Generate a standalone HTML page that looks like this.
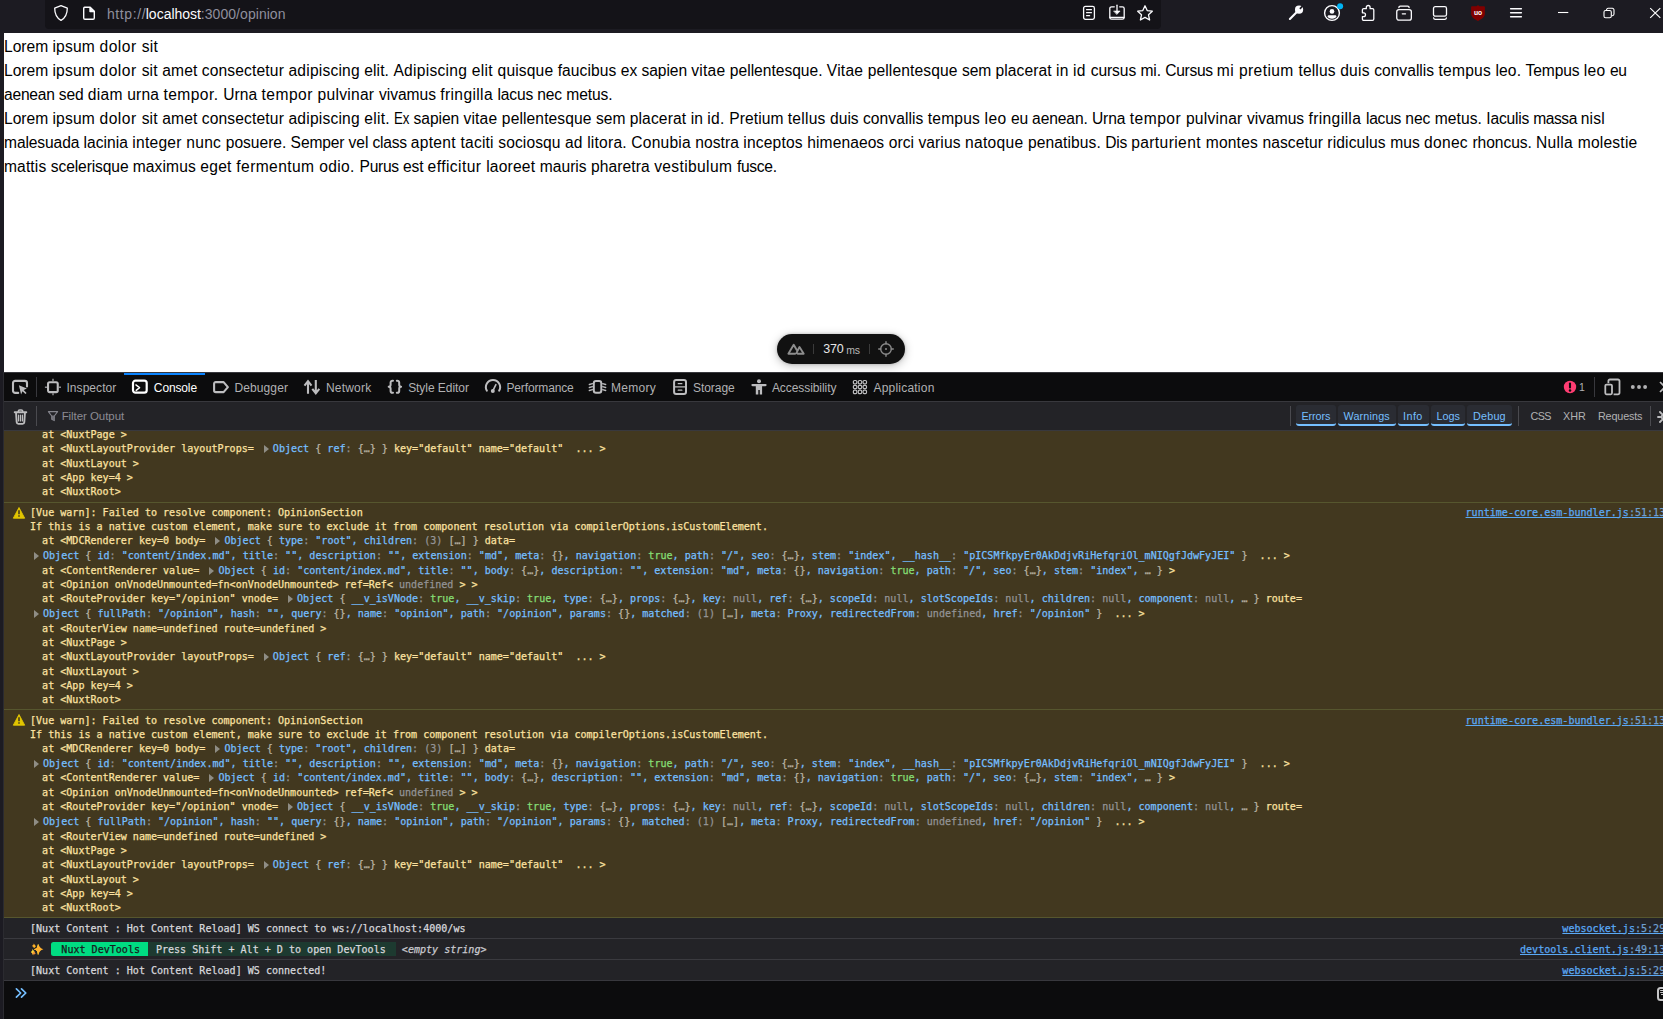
<!DOCTYPE html>
<html><head><meta charset="utf-8"><title>localhost:3000/opinion</title>
<style>
*{box-sizing:border-box}
html,body{margin:0;padding:0;width:1663px;height:1019px;overflow:hidden;background:#1c1b22;font-family:"Liberation Sans",sans-serif}
body{position:relative}
body>div,body>span,body>a,body>svg{position:absolute}
#chrome{left:0;top:0;width:1663px;height:33px;background:#1c1b22}
#urlbar{left:45px;top:-6px;width:1116px;height:34.5px;border-radius:4px;background:#141318}
#leftstrip{left:0;top:33px;width:4px;height:986px;background:#1c1b22}
#page{left:4px;top:33px;width:1659px;height:339px;background:#fff}
.pl{left:4px;white-space:pre;font:15.6px/24px "Liberation Sans",sans-serif;color:#000;height:24px}
.pl span{display:inline-block;white-space:pre;height:24px;vertical-align:top}
#dt-tabs{left:4px;top:372px;width:1659px;height:29px;background:#0c0c0d;border-top:1px solid #38383d}
#dt-tabs-b{left:4px;top:401px;width:1659px;height:1px;background:#38383d}
#tabsel{left:124px;top:373px;width:81px;height:2px;background:#0a84ff}
#dt-filter{left:4px;top:402px;width:1659px;height:29px;background:#232327;border-bottom:1px solid #38383d}
#out{left:4px;top:431px;width:1659px;height:550px;background:#232327}
.warn{left:4px;width:1659px;background:#42381f;border-top:1px solid #56562e}
.row{left:4px;width:1659px;height:21px;background:#232327;border-top:1px solid #3a3a3f}
#input{left:4px;top:980px;width:1659px;height:39px;background:#0c0c0d;border-top:1px solid #38383d}
.ln{left:30px;-webkit-text-stroke:0.25px;height:14px;line-height:14px;white-space:pre;font-family:"DejaVu Sans Mono","Liberation Mono",monospace;font-size:10.05px;color:#fce2a1}
.ln i{font-style:normal}
.lg{color:#d7d7db}
.k{color:#75bfff}.t{color:#86de74}.n{color:#939395}.c{color:#939395}.p{color:#b9b3a3}
.ar{display:inline-block;width:13px;height:9px;position:relative;vertical-align:baseline}
.ar:after{content:"";position:absolute;left:3.8px;top:2.6px;border-left:5.5px solid #8f8d85;border-top:4.2px solid transparent;border-bottom:4.2px solid transparent}
.lk{right:-2.2px;-webkit-text-stroke:0.25px;height:14px;line-height:14px;white-space:pre;font-family:"DejaVu Sans Mono","Liberation Mono",monospace;font-size:10.05px;color:#5aa9f5;text-decoration:underline}
.lk u{color:#6f9fce;text-decoration:none}
.lb{white-space:pre;line-height:14px;height:14px;font-family:"Liberation Sans",sans-serif}
.fbtn{top:405px;height:21.3px;background:#2a2c33;border-bottom:2px solid #75bfff;border-radius:3px}
#pill{left:777px;top:334px;width:128px;height:30px;border-radius:15px;background:#111;box-shadow:0 2px 10px rgba(0,0,0,.25),0 0 3px rgba(0,0,0,.2)}
.nb1{background:#00dc82;color:#18181b;padding:1.7px 2.3px 1.2px 4.3px;border-radius:2.5px 0 0 2.5px}
.nb2{background:#1d3a30;color:#d7d7db;padding:1.7px 4px 1.2px 1.5px}
.es{font-style:italic;color:#c9c9cf}
.em{display:inline-block;width:21px;height:10px}

</style></head><body>
<div id="chrome"></div>
<div id="urlbar"></div>
<div id="page"></div>
<div class="pl" style="top:35px"><span style="width:48.45px;letter-spacing:-0.016px">Lorem </span><span style="width:47.00px;letter-spacing:0.177px">ipsum </span><span style="width:42.20px;letter-spacing:0.531px">dolor </span><span style="width:16.40px;letter-spacing:0.269px">sit</span></div>
<div class="pl" style="top:59px"><span style="width:48.45px;letter-spacing:-0.016px">Lorem </span><span style="width:47.00px;letter-spacing:0.177px">ipsum </span><span style="width:42.20px;letter-spacing:0.531px">dolor </span><span style="width:20.70px;letter-spacing:0.191px">sit </span><span style="width:39.40px;letter-spacing:0.080px">amet </span><span style="width:86.80px;letter-spacing:0.154px">consectetur </span><span style="width:75.80px;letter-spacing:0.192px">adipiscing </span><span style="width:29.10px;letter-spacing:0.082px">elit. </span><span style="width:78.40px;letter-spacing:0.271px">Adipiscing </span><span style="width:25.80px;letter-spacing:0.304px">elit </span><span style="width:60.10px;letter-spacing:0.141px">quisque </span><span style="width:63.10px;letter-spacing:0.075px">faucibus </span><span style="width:20.70px;letter-spacing:-0.037px">ex </span><span style="width:49.80px;letter-spacing:-0.071px">sapien </span><span style="width:38.60px;letter-spacing:0.220px">vitae </span><span style="width:97.00px;letter-spacing:-0.008px">pellentesque. </span><span style="width:40.90px;letter-spacing:0.218px">Vitae </span><span style="width:94.20px;letter-spacing:0.109px">pellentesque </span><span style="width:33.60px;letter-spacing:-0.049px">sem </span><span style="width:60.60px;letter-spacing:0.087px">placerat </span><span style="width:16.90px;letter-spacing:0.139px">in </span><span style="width:17.70px;letter-spacing:0.405px">id </span><span style="width:49.70px;letter-spacing:-0.081px">cursus </span><span style="width:24.90px;letter-spacing:-0.056px">mi. </span><span style="width:51.60px;letter-spacing:-0.305px">Cursus </span><span style="width:22.10px;letter-spacing:0.434px">mi </span><span style="width:59.50px;letter-spacing:0.395px">pretium </span><span style="width:41.80px;letter-spacing:0.150px">tellus </span><span style="width:33.90px;letter-spacing:0.189px">duis </span><span style="width:64.40px;letter-spacing:0.026px">convallis </span><span style="width:56.90px;letter-spacing:0.202px">tempus </span><span style="width:30.20px;letter-spacing:0.143px">leo. </span><span style="width:58.10px;letter-spacing:-0.120px">Tempus </span><span style="width:26.30px;letter-spacing:0.286px">leo </span><span style="width:16.70px;letter-spacing:-0.330px">eu</span></div>
<div class="pl" style="top:83px"><span style="width:54.75px;letter-spacing:-0.232px">aenean </span><span style="width:29.10px;letter-spacing:-0.096px">sed </span><span style="width:39.40px;letter-spacing:0.252px">diam </span><span style="width:36.30px;letter-spacing:0.151px">urna </span><span style="width:59.60px;letter-spacing:0.407px">tempor. </span><span style="width:38.40px;letter-spacing:0.052px">Urna </span><span style="width:56.10px;letter-spacing:0.461px">tempor </span><span style="width:61.30px;letter-spacing:0.261px">pulvinar </span><span style="width:61.40px;letter-spacing:-0.016px">vivamus </span><span style="width:57.30px;letter-spacing:0.357px">fringilla </span><span style="width:39.60px;letter-spacing:-0.192px">lacus </span><span style="width:29.10px;letter-spacing:-0.096px">nec </span><span style="width:46.30px;letter-spacing:-0.083px">metus.</span></div>
<div class="pl" style="top:107px"><span style="width:48.45px;letter-spacing:-0.016px">Lorem </span><span style="width:47.00px;letter-spacing:0.177px">ipsum </span><span style="width:42.20px;letter-spacing:0.531px">dolor </span><span style="width:20.70px;letter-spacing:0.191px">sit </span><span style="width:39.40px;letter-spacing:0.080px">amet </span><span style="width:86.80px;letter-spacing:0.154px">consectetur </span><span style="width:75.80px;letter-spacing:0.192px">adipiscing </span><span style="width:30.10px;letter-spacing:0.248px">elit. </span><span style="width:19.20px"><span style="transform:scaleX(0.852);transform-origin:0 0">Ex </span></span><span style="width:49.90px;letter-spacing:-0.057px">sapien </span><span style="width:38.40px;letter-spacing:0.186px">vitae </span><span style="width:94.20px;letter-spacing:0.109px">pellentesque </span><span style="width:33.60px;letter-spacing:-0.049px">sem </span><span style="width:61.10px;letter-spacing:0.143px">placerat </span><span style="width:16.40px;letter-spacing:-0.028px">in </span><span style="width:22.20px;letter-spacing:0.347px">id. </span><span style="width:58.50px;letter-spacing:0.055px">Pretium </span><span style="width:42.30px;letter-spacing:0.221px">tellus </span><span style="width:32.80px;letter-spacing:-0.031px">duis </span><span style="width:64.90px;letter-spacing:0.076px">convallis </span><span style="width:56.80px;letter-spacing:0.188px">tempus </span><span style="width:26.50px;letter-spacing:0.336px">leo </span><span style="width:21.00px;letter-spacing:-0.229px">eu </span><span style="width:59.80px;letter-spacing:-0.113px">aenean. </span><span style="width:37.90px;letter-spacing:-0.048px">Urna </span><span style="width:56.15px;letter-spacing:0.468px">tempor </span><span style="width:61.15px;letter-spacing:0.244px">pulvinar </span><span style="width:61.40px;letter-spacing:-0.016px">vivamus </span><span style="width:57.50px;letter-spacing:0.377px">fringilla </span><span style="width:39.30px;letter-spacing:-0.242px">lacus </span><span style="width:29.40px;letter-spacing:-0.021px">nec </span><span style="width:51.70px;letter-spacing:0.080px">metus. </span><span style="width:46.90px;letter-spacing:-0.206px">Iaculis </span><span style="width:47.50px;letter-spacing:-0.461px">massa </span><span style="width:24.20px;letter-spacing:0.198px">nisl</span></div>
<div class="pl" style="top:131px"><span style="width:79.55px;letter-spacing:-0.108px">malesuada </span><span style="width:48.70px;letter-spacing:0.019px">lacinia </span><span style="width:54.10px;letter-spacing:0.261px">integer </span><span style="width:39.40px;letter-spacing:0.249px">nunc </span><span style="width:64.90px;letter-spacing:-0.015px">posuere. </span><span style="width:58.00px;letter-spacing:-0.134px">Semper </span><span style="width:24.00px;letter-spacing:-0.070px">vel </span><span style="width:38.10px;letter-spacing:-0.296px">class </span><span style="width:49.80px;letter-spacing:0.302px">aptent </span><span style="width:37.80px;letter-spacing:0.199px">taciti </span><span style="width:66.70px;letter-spacing:0.090px">sociosqu </span><span style="width:22.20px;letter-spacing:0.171px">ad </span><span style="width:44.20px;letter-spacing:0.216px">litora. </span><span style="width:63.90px;letter-spacing:0.185px">Conubia </span><span style="width:48.00px;letter-spacing:0.045px">nostra </span><span style="width:64.10px;letter-spacing:0.186px">inceptos </span><span style="width:81.30px;letter-spacing:0.067px">himenaeos </span><span style="width:29.80px;letter-spacing:0.066px">orci </span><span style="width:46.50px;letter-spacing:0.080px">varius </span><span style="width:63.10px;letter-spacing:0.300px">natoque </span><span style="width:77.30px;letter-spacing:0.091px">penatibus. </span><span style="width:25.80px;letter-spacing:-0.265px">Dis </span><span style="width:74.60px;letter-spacing:0.398px">parturient </span><span style="width:56.80px;letter-spacing:0.188px">montes </span><span style="width:64.80px;letter-spacing:0.072px">nascetur </span><span style="width:62.90px;letter-spacing:0.137px">ridiculus </span><span style="width:33.90px;letter-spacing:0.026px">mus </span><span style="width:48.40px;letter-spacing:0.262px">donec </span><span style="width:63.50px;letter-spacing:-0.073px">rhoncus. </span><span style="width:41.70px;letter-spacing:0.304px">Nulla </span><span style="width:59.80px;letter-spacing:0.215px">molestie</span></div>
<div class="pl" style="top:155px"><span style="width:46.75px;letter-spacing:0.118px">mattis </span><span style="width:82.00px;letter-spacing:-0.102px">scelerisque </span><span style="width:67.50px;letter-spacing:0.098px">maximus </span><span style="width:36.10px;letter-spacing:0.282px">eget </span><span style="width:82.80px;letter-spacing:0.392px">fermentum </span><span style="width:40.40px;letter-spacing:0.374px">odio. </span><span style="width:43.40px;letter-spacing:-0.280px">Purus </span><span style="width:24.70px;letter-spacing:-0.110px">est </span><span style="width:58.60px;letter-spacing:0.429px">efficitur </span><span style="width:53.60px;letter-spacing:0.198px">laoreet </span><span style="width:51.20px;letter-spacing:0.011px">mauris </span><span style="width:63.20px;letter-spacing:0.086px">pharetra </span><span style="width:82.80px;letter-spacing:0.357px">vestibulum </span><span style="width:39.80px;letter-spacing:-0.302px">fusce.</span></div>
<div id="dt-tabs"></div><div id="dt-tabs-b"></div>
<div id="tabsel"></div>
<div id="dt-filter"></div>
<div id="out"></div>
<div class="warn" style="top:431px;height:71px;border-top:none"></div>
<div class="warn" style="top:502px;height:207px"></div>
<div class="warn" style="top:709px;height:208px"></div>
<div class="row" style="top:917px;border-top-color:#56562e"></div>
<div class="row" style="top:938px"></div>
<div class="row" style="top:959px"></div>
<div id="input"></div>
<div class="ln" style="top:427.5px">  at &lt;NuxtPage &gt;</div>
<div class="ln" style="top:441.5px">  at &lt;NuxtLayoutProvider layoutProps= <b class="ar"></b><i class="k">Object</i> <i class="p">{</i> <i class="k">ref</i><i class="c">:</i> <i class="p">{…}</i> <i class="p">}</i> key="default" name="default"  ... &gt;</div>
<div class="ln" style="top:456.5px">  at &lt;NuxtLayout &gt;</div>
<div class="ln" style="top:470.5px">  at &lt;App key=4 &gt;</div>
<div class="ln" style="top:484.5px">  at &lt;NuxtRoot&gt;</div>
<div class="ln" style="top:505.5px">[Vue warn]: Failed to resolve component: OpinionSection</div>
<div class="ln" style="top:519.5px">If this is a native custom element, make sure to exclude it from component resolution via compilerOptions.isCustomElement.</div>
<div class="ln" style="top:533.5px">  at &lt;MDCRenderer key=0 body= <b class="ar"></b><i class="k">Object</i> <i class="p">{</i> <i class="k">type</i><i class="c">:</i> <i class="k">"root"</i><i class="k">,</i> <i class="k">children</i><i class="c">:</i> <i class="n">(3)</i> <i class="p">[…]</i> <i class="p">}</i> data=</div>
<div class="ln" style="top:548.5px"><b class="ar"></b><i class="k">Object</i> <i class="p">{</i> <i class="k">id</i><i class="c">:</i> <i class="k">"content/index.md"</i><i class="k">,</i> <i class="k">title</i><i class="c">:</i> <i class="k">""</i><i class="k">,</i> <i class="k">description</i><i class="c">:</i> <i class="k">""</i><i class="k">,</i> <i class="k">extension</i><i class="c">:</i> <i class="k">"md"</i><i class="k">,</i> <i class="k">meta</i><i class="c">:</i> <i class="p">{}</i><i class="k">,</i> <i class="k">navigation</i><i class="c">:</i> <i class="t">true</i><i class="k">,</i> <i class="k">path</i><i class="c">:</i> <i class="k">"/"</i><i class="k">,</i> <i class="k">seo</i><i class="c">:</i> <i class="p">{…}</i><i class="k">,</i> <i class="k">stem</i><i class="c">:</i> <i class="k">"index"</i><i class="k">,</i> <i class="k">__hash__</i><i class="c">:</i> <i class="k">"pICSMfkpyEr0AkDdjvRiHefqriOl_mNIQgfJdwFyJEI"</i> <i class="p">}</i>  ... &gt;</div>
<div class="ln" style="top:563.5px">  at &lt;ContentRenderer value= <b class="ar"></b><i class="k">Object</i> <i class="p">{</i> <i class="k">id</i><i class="c">:</i> <i class="k">"content/index.md"</i><i class="k">,</i> <i class="k">title</i><i class="c">:</i> <i class="k">""</i><i class="k">,</i> <i class="k">body</i><i class="c">:</i> <i class="p">{…}</i><i class="k">,</i> <i class="k">description</i><i class="c">:</i> <i class="k">""</i><i class="k">,</i> <i class="k">extension</i><i class="c">:</i> <i class="k">"md"</i><i class="k">,</i> <i class="k">meta</i><i class="c">:</i> <i class="p">{}</i><i class="k">,</i> <i class="k">navigation</i><i class="c">:</i> <i class="t">true</i><i class="k">,</i> <i class="k">path</i><i class="c">:</i> <i class="k">"/"</i><i class="k">,</i> <i class="k">seo</i><i class="c">:</i> <i class="p">{…}</i><i class="k">,</i> <i class="k">stem</i><i class="c">:</i> <i class="k">"index"</i><i class="k">,</i> <i class="p">…</i> <i class="p">}</i> &gt;</div>
<div class="ln" style="top:577.5px">  at &lt;Opinion onVnodeUnmounted=fn&lt;onVnodeUnmounted&gt; ref=Ref&lt; <i class="n">undefined</i> &gt; &gt;</div>
<div class="ln" style="top:591.5px">  at &lt;RouteProvider key="/opinion" vnode= <b class="ar"></b><i class="k">Object</i> <i class="p">{</i> <i class="k">__v_isVNode</i><i class="c">:</i> <i class="t">true</i><i class="k">,</i> <i class="k">__v_skip</i><i class="c">:</i> <i class="t">true</i><i class="k">,</i> <i class="k">type</i><i class="c">:</i> <i class="p">{…}</i><i class="k">,</i> <i class="k">props</i><i class="c">:</i> <i class="p">{…}</i><i class="k">,</i> <i class="k">key</i><i class="c">:</i> <i class="n">null</i><i class="k">,</i> <i class="k">ref</i><i class="c">:</i> <i class="p">{…}</i><i class="k">,</i> <i class="k">scopeId</i><i class="c">:</i> <i class="n">null</i><i class="k">,</i> <i class="k">slotScopeIds</i><i class="c">:</i> <i class="n">null</i><i class="k">,</i> <i class="k">children</i><i class="c">:</i> <i class="n">null</i><i class="k">,</i> <i class="k">component</i><i class="c">:</i> <i class="n">null</i><i class="k">,</i> <i class="p">…</i> <i class="p">}</i> route=</div>
<div class="ln" style="top:606.5px"><b class="ar"></b><i class="k">Object</i> <i class="p">{</i> <i class="k">fullPath</i><i class="c">:</i> <i class="k">"/opinion"</i><i class="k">,</i> <i class="k">hash</i><i class="c">:</i> <i class="k">""</i><i class="k">,</i> <i class="k">query</i><i class="c">:</i> <i class="p">{}</i><i class="k">,</i> <i class="k">name</i><i class="c">:</i> <i class="k">"opinion"</i><i class="k">,</i> <i class="k">path</i><i class="c">:</i> <i class="k">"/opinion"</i><i class="k">,</i> <i class="k">params</i><i class="c">:</i> <i class="p">{}</i><i class="k">,</i> <i class="k">matched</i><i class="c">:</i> <i class="n">(1)</i> <i class="p">[…]</i><i class="k">,</i> <i class="k">meta</i><i class="c">:</i> <i class="k">Proxy</i><i class="k">,</i> <i class="k">redirectedFrom</i><i class="c">:</i> <i class="n">undefined</i><i class="k">,</i> <i class="k">href</i><i class="c">:</i> <i class="k">"/opinion"</i> <i class="p">}</i>  ... &gt;</div>
<div class="ln" style="top:621.5px">  at &lt;RouterView name=undefined route=undefined &gt;</div>
<div class="ln" style="top:635.5px">  at &lt;NuxtPage &gt;</div>
<div class="ln" style="top:649.5px">  at &lt;NuxtLayoutProvider layoutProps= <b class="ar"></b><i class="k">Object</i> <i class="p">{</i> <i class="k">ref</i><i class="c">:</i> <i class="p">{…}</i> <i class="p">}</i> key="default" name="default"  ... &gt;</div>
<div class="ln" style="top:664.5px">  at &lt;NuxtLayout &gt;</div>
<div class="ln" style="top:678.5px">  at &lt;App key=4 &gt;</div>
<div class="ln" style="top:692.5px">  at &lt;NuxtRoot&gt;</div>
<div class="ln" style="top:713.5px">[Vue warn]: Failed to resolve component: OpinionSection</div>
<div class="ln" style="top:727.5px">If this is a native custom element, make sure to exclude it from component resolution via compilerOptions.isCustomElement.</div>
<div class="ln" style="top:741.5px">  at &lt;MDCRenderer key=0 body= <b class="ar"></b><i class="k">Object</i> <i class="p">{</i> <i class="k">type</i><i class="c">:</i> <i class="k">"root"</i><i class="k">,</i> <i class="k">children</i><i class="c">:</i> <i class="n">(3)</i> <i class="p">[…]</i> <i class="p">}</i> data=</div>
<div class="ln" style="top:756.5px"><b class="ar"></b><i class="k">Object</i> <i class="p">{</i> <i class="k">id</i><i class="c">:</i> <i class="k">"content/index.md"</i><i class="k">,</i> <i class="k">title</i><i class="c">:</i> <i class="k">""</i><i class="k">,</i> <i class="k">description</i><i class="c">:</i> <i class="k">""</i><i class="k">,</i> <i class="k">extension</i><i class="c">:</i> <i class="k">"md"</i><i class="k">,</i> <i class="k">meta</i><i class="c">:</i> <i class="p">{}</i><i class="k">,</i> <i class="k">navigation</i><i class="c">:</i> <i class="t">true</i><i class="k">,</i> <i class="k">path</i><i class="c">:</i> <i class="k">"/"</i><i class="k">,</i> <i class="k">seo</i><i class="c">:</i> <i class="p">{…}</i><i class="k">,</i> <i class="k">stem</i><i class="c">:</i> <i class="k">"index"</i><i class="k">,</i> <i class="k">__hash__</i><i class="c">:</i> <i class="k">"pICSMfkpyEr0AkDdjvRiHefqriOl_mNIQgfJdwFyJEI"</i> <i class="p">}</i>  ... &gt;</div>
<div class="ln" style="top:770.5px">  at &lt;ContentRenderer value= <b class="ar"></b><i class="k">Object</i> <i class="p">{</i> <i class="k">id</i><i class="c">:</i> <i class="k">"content/index.md"</i><i class="k">,</i> <i class="k">title</i><i class="c">:</i> <i class="k">""</i><i class="k">,</i> <i class="k">body</i><i class="c">:</i> <i class="p">{…}</i><i class="k">,</i> <i class="k">description</i><i class="c">:</i> <i class="k">""</i><i class="k">,</i> <i class="k">extension</i><i class="c">:</i> <i class="k">"md"</i><i class="k">,</i> <i class="k">meta</i><i class="c">:</i> <i class="p">{}</i><i class="k">,</i> <i class="k">navigation</i><i class="c">:</i> <i class="t">true</i><i class="k">,</i> <i class="k">path</i><i class="c">:</i> <i class="k">"/"</i><i class="k">,</i> <i class="k">seo</i><i class="c">:</i> <i class="p">{…}</i><i class="k">,</i> <i class="k">stem</i><i class="c">:</i> <i class="k">"index"</i><i class="k">,</i> <i class="p">…</i> <i class="p">}</i> &gt;</div>
<div class="ln" style="top:785.5px">  at &lt;Opinion onVnodeUnmounted=fn&lt;onVnodeUnmounted&gt; ref=Ref&lt; <i class="n">undefined</i> &gt; &gt;</div>
<div class="ln" style="top:799.5px">  at &lt;RouteProvider key="/opinion" vnode= <b class="ar"></b><i class="k">Object</i> <i class="p">{</i> <i class="k">__v_isVNode</i><i class="c">:</i> <i class="t">true</i><i class="k">,</i> <i class="k">__v_skip</i><i class="c">:</i> <i class="t">true</i><i class="k">,</i> <i class="k">type</i><i class="c">:</i> <i class="p">{…}</i><i class="k">,</i> <i class="k">props</i><i class="c">:</i> <i class="p">{…}</i><i class="k">,</i> <i class="k">key</i><i class="c">:</i> <i class="n">null</i><i class="k">,</i> <i class="k">ref</i><i class="c">:</i> <i class="p">{…}</i><i class="k">,</i> <i class="k">scopeId</i><i class="c">:</i> <i class="n">null</i><i class="k">,</i> <i class="k">slotScopeIds</i><i class="c">:</i> <i class="n">null</i><i class="k">,</i> <i class="k">children</i><i class="c">:</i> <i class="n">null</i><i class="k">,</i> <i class="k">component</i><i class="c">:</i> <i class="n">null</i><i class="k">,</i> <i class="p">…</i> <i class="p">}</i> route=</div>
<div class="ln" style="top:814.5px"><b class="ar"></b><i class="k">Object</i> <i class="p">{</i> <i class="k">fullPath</i><i class="c">:</i> <i class="k">"/opinion"</i><i class="k">,</i> <i class="k">hash</i><i class="c">:</i> <i class="k">""</i><i class="k">,</i> <i class="k">query</i><i class="c">:</i> <i class="p">{}</i><i class="k">,</i> <i class="k">name</i><i class="c">:</i> <i class="k">"opinion"</i><i class="k">,</i> <i class="k">path</i><i class="c">:</i> <i class="k">"/opinion"</i><i class="k">,</i> <i class="k">params</i><i class="c">:</i> <i class="p">{}</i><i class="k">,</i> <i class="k">matched</i><i class="c">:</i> <i class="n">(1)</i> <i class="p">[…]</i><i class="k">,</i> <i class="k">meta</i><i class="c">:</i> <i class="k">Proxy</i><i class="k">,</i> <i class="k">redirectedFrom</i><i class="c">:</i> <i class="n">undefined</i><i class="k">,</i> <i class="k">href</i><i class="c">:</i> <i class="k">"/opinion"</i> <i class="p">}</i>  ... &gt;</div>
<div class="ln" style="top:829.5px">  at &lt;RouterView name=undefined route=undefined &gt;</div>
<div class="ln" style="top:843.5px">  at &lt;NuxtPage &gt;</div>
<div class="ln" style="top:857.5px">  at &lt;NuxtLayoutProvider layoutProps= <b class="ar"></b><i class="k">Object</i> <i class="p">{</i> <i class="k">ref</i><i class="c">:</i> <i class="p">{…}</i> <i class="p">}</i> key="default" name="default"  ... &gt;</div>
<div class="ln" style="top:872.5px">  at &lt;NuxtLayout &gt;</div>
<div class="ln" style="top:886.5px">  at &lt;App key=4 &gt;</div>
<div class="ln" style="top:900.5px">  at &lt;NuxtRoot&gt;</div>
<div class="ln lg" style="top:921.5px">[Nuxt Content : Hot Content Reload] WS connect to ws://localhost:4000/ws</div>
<div class="ln lg" style="top:942.5px"><span class="em">✨</span><span class="nb1"> Nuxt DevTools </span><span class="nb2"> Press Shift + Alt + D to open DevTools </span><span class="es"> &lt;empty string&gt;</span></div>
<div class="ln lg" style="top:963.5px">[Nuxt Content : Hot Content Reload] WS connected!</div>
<a class="lk" style="top:505.5px">runtime-core.esm-bundler.js<u>:51:13</u></a>
<a class="lk" style="top:713.5px">runtime-core.esm-bundler.js<u>:51:13</u></a>
<a class="lk" style="top:921.5px">websocket.js<u>:5:29</u></a>
<a class="lk" style="top:942.5px">devtools.client.js<u>:49:13</u></a>
<a class="lk" style="top:963.5px">websocket.js<u>:5:29</u></a>
<div id="leftstrip"></div>
<div class="fbtn" style="left:1295.7px;width:40.4px"></div>
<div class="fbtn" style="left:1338px;width:58px"></div>
<div class="fbtn" style="left:1398px;width:31px"></div>
<div class="fbtn" style="left:1431px;width:34px"></div>
<div class="fbtn" style="left:1467px;width:45px"></div>
<div id="pill"></div>
<span class="lb" style="left:66.45px;top:381px;font-size:12px;color:#b1b1b3;letter-spacing:0.060px;">Inspector</span>
<span class="lb" style="left:153.85px;top:381px;font-size:12px;color:#ffffff;letter-spacing:-0.133px;">Console</span>
<span class="lb" style="left:234.45px;top:381px;font-size:12px;color:#b1b1b3;letter-spacing:0.110px;">Debugger</span>
<span class="lb" style="left:325.95px;top:381px;font-size:12px;color:#b1b1b3;letter-spacing:0.198px;">Network</span>
<span class="lb" style="left:408.15px;top:381px;font-size:12px;color:#b1b1b3;letter-spacing:-0.055px;">Style Editor</span>
<span class="lb" style="left:506.45px;top:381px;font-size:12px;color:#b1b1b3;letter-spacing:-0.137px;">Performance</span>
<span class="lb" style="left:611.05px;top:381px;font-size:12px;color:#b1b1b3;letter-spacing:0.293px;">Memory</span>
<span class="lb" style="left:692.95px;top:381px;font-size:12px;color:#b1b1b3;letter-spacing:-0.047px;">Storage</span>
<span class="lb" style="left:771.95px;top:381px;font-size:12px;color:#b1b1b3;letter-spacing:-0.074px;">Accessibility</span>
<span class="lb" style="left:873.45px;top:381px;font-size:12px;color:#b1b1b3;letter-spacing:0.216px;">Application</span>
<span class="lb" style="left:1579.05px;top:380.2px;font-size:10.5px;color:#b1b1b3;letter-spacing:-0.544px;">1</span>
<span class="lb" style="left:61.65px;top:409.1px;font-size:11.5px;color:#8b8b93;letter-spacing:-0.060px;">Filter Output</span>
<span class="lb" style="left:1301.45px;top:408.7px;font-size:10.8px;color:#75bfff;letter-spacing:-0.084px;">Errors</span>
<span class="lb" style="left:1343.45px;top:408.7px;font-size:10.8px;color:#75bfff;letter-spacing:0.150px;">Warnings</span>
<span class="lb" style="left:1402.95px;top:408.7px;font-size:10.8px;color:#75bfff;letter-spacing:0.471px;">Info</span>
<span class="lb" style="left:1436.45px;top:408.7px;font-size:10.8px;color:#75bfff;letter-spacing:-0.005px;">Logs</span>
<span class="lb" style="left:1472.95px;top:408.7px;font-size:10.8px;color:#75bfff;letter-spacing:0.214px;">Debug</span>
<span class="lb" style="left:1530.45px;top:408.7px;font-size:10.8px;color:#b1b1b3;letter-spacing:-0.601px;">CSS</span>
<span class="lb" style="left:1562.95px;top:408.7px;font-size:10.8px;color:#b1b1b3;letter-spacing:0.034px;">XHR</span>
<span class="lb" style="left:1597.95px;top:408.7px;font-size:10.8px;color:#b1b1b3;letter-spacing:-0.153px;">Requests</span>
<span class="lb" style="left:106.95px;top:7px;font-size:14px;color:#8f8f9d;letter-spacing:0.624px;">http://</span>
<span class="lb" style="left:145.75px;top:7px;font-size:14px;color:#fbfbfe;letter-spacing:-0.007px;">localhost</span>
<span class="lb" style="left:200.85px;top:7px;font-size:14px;color:#8f8f9d;letter-spacing:0.048px;">:3000/opinion</span>
<span class="lb" style="left:823.15px;top:341.5px;font-size:12.5px;color:#e6e6e6;letter-spacing:-0.153px;">370</span>
<span class="lb" style="left:846.25px;top:343px;font-size:10.5px;color:#b9b9b9;letter-spacing:-0.150px;">ms</span>
<!-- top bar icons -->
<svg style="left:53px;top:4px" width="16" height="18" viewBox="0 0 16 18" fill="none" stroke="#fbfbfe" stroke-width="1.3" stroke-linejoin="round"><path d="M8 1.6 L14.3 4.2 C14.3 9.8 12.2 14 8 16.4 C3.8 14 1.7 9.8 1.7 4.2 Z"/></svg>
<svg style="left:82px;top:5px" width="14" height="16" viewBox="0 0 14 16" fill="none" stroke="#fbfbfe" stroke-width="1.4" stroke-linejoin="round"><path d="M2.7 2.2 H8.2 L12.3 6.3 V13 a1.3 1.3 0 0 1 -1.3 1.3 H3 a1.3 1.3 0 0 1 -1.3 -1.3 V3.4 a1.2 1.2 0 0 1 1 -1.2 Z"/><path d="M8 2.4 V6.5 H12.2" fill="#fbfbfe"/></svg>
<svg style="left:1082px;top:5px" width="14" height="16" viewBox="0 0 14 16" fill="none" stroke="#fbfbfe" stroke-width="1.3" stroke-linecap="round"><rect x="1.6" y="1.4" width="10.8" height="13" rx="1.8"/><path d="M4.6 4.7 H9.4 M4.6 7.7 H9.4 M4.6 10.7 H7.6"/></svg>
<svg style="left:1108px;top:4px" width="18" height="17" viewBox="0 0 18 17" fill="none" stroke="#fbfbfe" stroke-width="1.3" stroke-linecap="round"><path d="M6.3 2.8 H3.6 a1.8 1.8 0 0 0 -1.8 1.8 V13.4 a1.8 1.8 0 0 0 1.8 1.8 H14.4 a1.8 1.8 0 0 0 1.8 -1.8 V4.6 a1.8 1.8 0 0 0 -1.8 -1.8 H11.7"/><path d="M2 13.4 H16"/><path d="M9 1.2 V8"/><path d="M5.9 7 H12.1 L9 10.3 Z" fill="#fbfbfe" stroke-width="0.6"/></svg>
<svg style="left:1136px;top:4px" width="18" height="18" viewBox="0 0 18 18" fill="none" stroke="#fbfbfe" stroke-width="1.3" stroke-linejoin="round"><path d="M9 1.8 L11.2 6.6 L16.3 7.2 L12.5 10.8 L13.6 16 L9 13.4 L4.4 16 L5.5 10.8 L1.7 7.2 L6.8 6.6 Z"/></svg>
<svg style="left:1288px;top:4px" width="17" height="18" viewBox="0 0 17 18"><path d="M9.300 7.400 L1.900 15" stroke="#fbfbfe" stroke-width="2.100" stroke-linecap="round"/><circle cx="11.050" cy="5.650" r="4.100" fill="#fbfbfe"/><path d="M11.900 4.800 L15 1.700" stroke="#1c1b22" stroke-width="1.700"/></svg>
<svg style="left:1322px;top:3px" width="22" height="20" viewBox="0 0 22 20"><circle cx="10" cy="10" r="7.400" fill="none" stroke="#fbfbfe" stroke-width="1.400"/><circle cx="10" cy="8.400" r="2.350" fill="#fbfbfe"/><path d="M5.700 13.200 a1 1 0 0 1 1 -1 H13.300 a1 1 0 0 1 1 1 C14.300 14.500 12.500 15.700 10 15.700 C7.500 15.700 5.700 14.500 5.700 13.200 Z" fill="#fbfbfe"/><circle cx="18.100" cy="3.200" r="3" fill="#00b3f4"/></svg>
<svg style="left:1360.300px;top:4px" width="17" height="18" viewBox="0 0 17 18" fill="none" stroke="#fbfbfe" stroke-width="1.3" stroke-linejoin="round"><path d="M6.3 4.700 V3.400 a1.900 1.900 0 0 1 3.800 0 V4.700 H12.500 a1.300 1.300 0 0 1 1.300 1.300 V15 a1.300 1.300 0 0 1 -1.300 1.300 H3.700 a1.300 1.300 0 0 1 -1.300 -1.300 V12.600 H3.600 a1.900 1.900 0 0 0 0 -3.800 H2.400 V6 a1.300 1.300 0 0 1 1.300 -1.300 Z"/></svg>
<svg style="left:1395px;top:4px" width="18" height="18" viewBox="0 0 18 18" fill="none" stroke="#fbfbfe" stroke-width="1.300" stroke-linecap="round"><rect x="1.750" y="5.650" width="14.600" height="10.450" rx="2.200"/><path d="M3.900 3.500 Q3.900 2.100 5.400 2.100 H12.600 Q14.100 2.100 14.100 3.500"/><path d="M7.300 9.800 H10.500" stroke-width="1.300"/></svg>
<svg style="left:1432px;top:5px" width="16" height="16" viewBox="0 0 16 16" fill="none" stroke="#fbfbfe" stroke-width="1.300" stroke-linecap="round"><rect x="1.500" y="1.600" width="13" height="9.600" rx="1.800"/><path d="M1.600 13 Q1.800 14.300 3.300 14.300 H12.700 Q14.200 14.300 14.400 13"/></svg>
<svg style="left:1470px;top:4px" width="16" height="18" viewBox="0 0 16 18"><path d="M8 1 C8.600 1.900 9.300 2.300 10.200 2.300 H14 a0.900 0.900 0 0 1 0.900 0.900 V9.600 C14.900 13.200 11.600 15.400 8 16.900 C4.400 15.400 1.100 13.200 1.100 9.600 V3.200 a0.900 0.900 0 0 1 0.900 -0.900 H5.800 C6.700 2.300 7.400 1.900 8 1 Z" fill="#800000"/><text x="3.900" y="10.900" font-family="'Liberation Sans',sans-serif" font-weight="bold" font-size="7.800" fill="#fff" textLength="8.200" lengthAdjust="spacingAndGlyphs">uo</text></svg>
<svg style="left:1509px;top:5.800px" width="14" height="14" viewBox="0 0 14 14" stroke="#fbfbfe" stroke-width="1.400" stroke-linecap="round"><path d="M1.600 2.800 H12.400 M1.600 6.800 H12.400 M1.600 10.700 H12.400"/></svg>
<svg style="left:1557px;top:11px" width="12" height="3" viewBox="0 0 12 3" stroke="#ffffff" stroke-width="1.100"><path d="M1 1.500 H11.300"/></svg>
<svg style="left:1602px;top:6px" width="14" height="14" viewBox="0 0 14 14" fill="none" stroke="#ffffff" stroke-width="1.100"><rect x="2" y="4.500" width="7.300" height="7.300" rx="1.600"/><path d="M4.500 4.300 V3.900 a1.600 1.600 0 0 1 1.600 -1.600 H10.400 a1.600 1.600 0 0 1 1.600 1.600 V8.100 a1.600 1.600 0 0 1 -1.600 1.600 H9.600"/></svg>
<svg style="left:1649px;top:7px" width="13" height="12" viewBox="0 0 13 12" stroke="#ffffff" stroke-width="1.150"><path d="M1.200 1.100 L11.300 10.900 M11.300 1.100 L1.200 10.900"/></svg>
<!-- devtools tab icons -->
<svg style="left:11px;top:378px" width="18" height="18" viewBox="0 0 18 18" fill="none" stroke="#bdbdbf" stroke-width="2.1" stroke-linecap="round"><path d="M7.200 14.900 H4.200 a2.200 2.200 0 0 1 -2.200 -2.200 V5.100 a2.200 2.200 0 0 1 2.200 -2.200 H13.800 a2.200 2.200 0 0 1 2.200 2.200 V8.400"/><path d="M7.900 7.300 L15.900 10.600 L12.700 12 L15.600 14.900 L14.400 16.100 L11.500 13.200 L10.100 16.400 Z" fill="#bdbdbf" stroke="none"/></svg>
<div style="left:36px;top:377px;width:1px;height:20px;background:#38383d"></div>
<svg style="left:44px;top:377px" width="18" height="19" viewBox="0 0 18 19" fill="none" stroke="#bdbdbf" stroke-width="2.1"><path d="M9 1.800 V4.200 M9 16.200 V18.300 M0.900 10.200 H3 M14.800 10.200 H17" stroke="#8e8e90" stroke-width="1.500"/><rect x="4.050" y="5.250" width="9.700" height="9.900" rx="1.600"/></svg>
<svg style="left:131px;top:378px" width="18" height="18" viewBox="0 0 18 18" fill="none" stroke="#ffffff" stroke-width="2.200" stroke-linecap="round" stroke-linejoin="round"><rect x="2" y="2.700" width="13.700" height="12" rx="2.400"/><path d="M4.900 6.900 L8.600 9.600 L5.200 12.400" stroke-width="1.400"/></svg>
<svg style="left:212px;top:378px" width="19" height="18" viewBox="0 0 19 18" fill="none" stroke="#bdbdbf" stroke-width="2.100" stroke-linejoin="round"><path d="M3.800 4.100 H11.600 L15.900 9.100 L11.600 14.100 H3.800 a1.700 1.700 0 0 1 -1.700 -1.700 V5.800 a1.700 1.700 0 0 1 1.700 -1.700 Z"/></svg>
<svg style="left:303px;top:378px" width="18" height="18" viewBox="0 0 18 18" fill="none" stroke="#bdbdbf" stroke-width="2.100" stroke-linecap="butt" stroke-linejoin="miter"><path d="M5 15.800 V3.600 M1.500 7.600 L5 3.200 L8.500 7.600"/><path d="M12.800 2 V14.800 M9.300 10.800 L12.800 15.200 L16.300 10.800"/></svg>
<svg style="left:386px;top:378px" width="18" height="18" viewBox="0 0 18 18" fill="none" stroke="#bdbdbf" stroke-width="2" stroke-linecap="round" stroke-linejoin="round"><path d="M7 2.700 H6.400 a1.800 1.800 0 0 0 -1.800 1.800 V6.700 Q4.600 8.600 2.700 8.700 Q4.600 8.800 4.600 10.700 V12.900 a1.800 1.800 0 0 0 1.800 1.800 H7"/><path d="M10.800 2.700 H11.400 a1.800 1.800 0 0 1 1.800 1.800 V6.700 Q13.200 8.600 15.100 8.700 Q13.200 8.800 13.200 10.700 V12.900 a1.800 1.800 0 0 1 -1.800 1.800 H10.800"/></svg>
<svg style="left:484px;top:377px" width="18" height="18" viewBox="0 0 18 18" fill="none" stroke="#bdbdbf" stroke-width="2" stroke-linecap="round"><path d="M2.800 13.600 A7.100 7.100 0 1 1 15.200 13.600"/><path d="M11.900 7.600 L8.800 13.900" stroke-width="1.600"/><circle cx="8.800" cy="13.900" r="2" fill="#bdbdbf" stroke="none"/></svg>
<svg style="left:588px;top:378px" width="19" height="18" viewBox="0 0 19 18" fill="none" stroke="#bdbdbf" stroke-width="2" stroke-linecap="round"><rect x="5.800" y="3" width="7.500" height="11.800" rx="2.200"/><path d="M1.300 6.500 L4.400 5.700 M1.300 9.500 L4.400 8.700 M1.300 12.500 L4.400 11.700 M17.700 6.500 L14.700 5.700 M17.700 9.500 L14.700 8.700 M17.700 12.500 L14.700 11.700" stroke-width="1.300"/></svg>
<svg style="left:672px;top:377px" width="17" height="19" viewBox="0 0 17 19" fill="none" stroke="#bdbdbf" stroke-width="2" stroke-linecap="round"><rect x="2.100" y="3" width="11.900" height="13.900" rx="2"/><path d="M2.500 9.800 H13.600" stroke-width="1.300"/><path d="M6.200 6.700 H9.900 M6.200 13.200 H9.900" stroke-width="1.200"/></svg>
<svg style="left:750px;top:378px" width="18" height="18" viewBox="0 0 18 18" fill="#bdbdbf"><circle cx="9" cy="3.200" r="2"/><path d="M2.500 5.900 H15.500 a0.600 0.600 0 0 1 0 2.300 H12.100 V16.600 H9.800 V12.100 H8.300 V16.600 H5.800 V8.200 H2.500 a0.600 0.600 0 0 1 0 -2.300 Z"/></svg>
<svg style="left:852px;top:379px" width="16" height="16" viewBox="0 0 16 16" fill="none" stroke="#bdbdbf" stroke-width="1.2"><rect x="1.4" y="1.5" width="3.4" height="3.4" rx="1.1"/><rect x="6.3" y="1.5" width="3.4" height="3.4" rx="1.1"/><rect x="11.1" y="1.5" width="3.4" height="3.4" rx="1.1"/><rect x="1.4" y="6.3" width="3.4" height="3.4" rx="1.1"/><rect x="6.3" y="6.3" width="3.4" height="3.4" rx="1.1"/><rect x="11.1" y="6.3" width="3.4" height="3.4" rx="1.1"/><rect x="1.4" y="11.2" width="3.4" height="3.4" rx="1.1"/><rect x="6.3" y="11.2" width="3.4" height="3.4" rx="1.1"/><rect x="11.1" y="11.2" width="3.4" height="3.4" rx="1.1"/></svg>
<!-- right side of tabs -->
<svg style="left:1563px;top:380px" width="14" height="14" viewBox="0 0 14 14"><circle cx="7" cy="7" r="6.200" fill="#ff3d72"/><path d="M7 3.600 V7.400" stroke="#0c0c0d" stroke-width="2.100" stroke-linecap="round"/><circle cx="7" cy="10.400" r="1.250" fill="#0c0c0d"/></svg>
<div style="left:1594px;top:377px;width:1px;height:20px;background:#38383d"></div>
<svg style="left:1604px;top:378px" width="17" height="18" viewBox="0 0 17 18" fill="none" stroke="#bdbdbf" stroke-width="1.800" stroke-linejoin="round"><path d="M4.400 5.200 V3 a1.500 1.500 0 0 1 1.500 -1.500 H14 a1.500 1.500 0 0 1 1.500 1.500 V14.800 a1.500 1.500 0 0 1 -1.500 1.500 H9.600"/><rect x="1.300" y="6.600" width="6.700" height="9.700" rx="1.200"/></svg>
<svg style="left:1630px;top:384px" width="18" height="6" viewBox="0 0 18 6" fill="#b1b1b3"><circle cx="2.800" cy="3" r="1.950"/><circle cx="9" cy="3" r="1.950"/><circle cx="15.100" cy="3" r="1.950"/></svg>
<svg style="left:1659px;top:381px" width="12" height="12" viewBox="0 0 12 12" stroke="#bdbdbf" stroke-width="1.700"><path d="M1 1 L11 11 M11 1 L1 11"/></svg>
<!-- filter bar -->
<svg style="left:12px;top:407px" width="17" height="19" viewBox="0 0 17 19" fill="none" stroke="#bdbdbf" stroke-width="1.900" stroke-linecap="round"><path d="M2.700 5.300 H14.300"/><path d="M6.300 4.600 V4.300 a1.400 1.400 0 0 1 1.400 -1.400 H9.300 a1.400 1.400 0 0 1 1.400 1.400 V4.600" stroke-width="1.500"/><path d="M4.100 6.200 L4.700 15.300 a1.700 1.700 0 0 0 1.700 1.600 H10.600 a1.700 1.700 0 0 0 1.700 -1.600 L12.900 6.200"/><path d="M6.600 8.200 V14 M8.500 8.200 V14 M10.400 8.200 V14" stroke-width="1.200"/></svg>
<div style="left:36px;top:406px;width:1px;height:20px;background:#4a4a4f"></div>
<svg style="left:47px;top:410px" width="12" height="12" viewBox="0 0 12 12" fill="none" stroke="#85858d" stroke-width="1.100" stroke-linejoin="round"><path d="M1.400 1.600 H10.600 L7.300 6 V10.600 L4.700 9.300 V6 Z"/><path d="M5.200 5.500 H6.800 V9.800 L5.200 9 Z" fill="#85858d" stroke="none"/></svg>
<div style="left:1290px;top:406px;width:1px;height:20px;background:#4a4a4f"></div>
<div style="left:1518px;top:406px;width:1px;height:20px;background:#4a4a4f"></div>
<div style="left:1650px;top:406px;width:1px;height:20px;background:#4a4a4f"></div>
<svg style="left:1657px;top:409px" width="16" height="16" viewBox="0 0 16 16" fill="none" stroke="#bdbdbf" stroke-width="1.900" stroke-linecap="round"><circle cx="8" cy="8" r="3.200"/><path d="M8 1 V3.500 M8 12.500 V15 M1 8 H3.500 M12.500 8 H15 M3 3 L4.800 4.800 M11.200 11.200 L13 13 M3 13 L4.800 11.200 M11.200 4.800 L13 3"/></svg>
<div style="left:3px;top:372px;width:1px;height:647px;background:#2b2b30"></div>
<!-- console icons -->
<svg style="left:12px;top:506px" width="14" height="14" viewBox="0 0 14 14"><path d="M7 1.500 L12.700 12.200 H1.300 Z" fill="#e2c500" stroke="#e2c500" stroke-width="0.900" stroke-linejoin="round"/><path d="M7 4.200 V8.300" stroke="#3a3020" stroke-width="1.500"/><rect x="6.250" y="9.300" width="1.500" height="1.400" fill="#3a3020"/></svg>
<svg style="left:12px;top:713px" width="14" height="14" viewBox="0 0 14 14"><path d="M7 1.500 L12.700 12.200 H1.300 Z" fill="#e2c500" stroke="#e2c500" stroke-width="0.900" stroke-linejoin="round"/><path d="M7 4.200 V8.300" stroke="#3a3020" stroke-width="1.500"/><rect x="6.250" y="9.300" width="1.500" height="1.400" fill="#3a3020"/></svg>
<svg style="left:14px;top:987px" width="14" height="13" viewBox="0 0 14 13" fill="none" stroke="#75bfff" stroke-width="1.700" stroke-linecap="round" stroke-linejoin="round"><path d="M2.400 1.900 L6.700 6 L2.400 10.200 M7.500 1.900 L11.800 6 L7.500 10.200"/></svg>
<svg style="left:1656px;top:987px" width="16" height="15" viewBox="0 0 16 15" fill="none" stroke="#c5c5c7" stroke-width="2"><rect x="2" y="1" width="13" height="12.100" rx="2.500"/><path d="M4.200 3.500 H9 M4.200 5.500 H9 M5 7.500 H9" stroke-width="1"/></svg>
<svg style="left:31px;top:943px" width="13" height="13" viewBox="0 0 13 13"><path d="M7.600 0.800 Q8.100 5.200 12.400 6.200 Q8.100 7.200 7.600 11.800 Q7.100 7.200 2.800 6.200 Q7.100 5.200 7.600 0.800 Z" fill="#ffb02e"/><path d="M2.900 0.600 Q3.100 2.500 5 2.900 Q3.100 3.300 2.900 5.200 Q2.700 3.300 0.800 2.900 Q2.700 2.500 2.900 0.600 Z" fill="#ffb02e"/><path d="M2.900 8 Q3.100 9.800 4.900 10.200 Q3.100 10.600 2.900 12.400 Q2.700 10.600 0.900 10.200 Q2.700 9.800 2.900 8 Z" fill="#f9923a"/></svg>
<!-- nuxt pill icons -->
<svg style="left:786px;top:342px" width="20" height="14" viewBox="0 0 20 14" fill="none" stroke="#8e8e8e" stroke-width="1.900" stroke-linejoin="round" stroke-linecap="round"><path d="M10.600 7.700 L7.700 2.700 L2.400 11.800 H9 Q10 11.800 10.500 10.900 L13.500 5 L17.700 11.800 H11.800"/></svg>
<div style="left:813px;top:344px;width:1px;height:10px;background:#3a3a3a"></div>
<div style="left:869px;top:344px;width:1px;height:10px;background:#3a3a3a"></div>
<svg style="left:877px;top:340px" width="18" height="18" viewBox="0 0 18 18" fill="none" stroke="#8a8a8a" stroke-width="1.400" stroke-linecap="round"><circle cx="9" cy="9" r="5.300"/><path d="M9 1.700 V3.700 M9 14.300 V16.300 M1.700 9 H3.700 M14.300 9 H16.300"/><circle cx="9" cy="9" r="1" fill="#8a8a8a" stroke="none"/></svg>

</body></html>
